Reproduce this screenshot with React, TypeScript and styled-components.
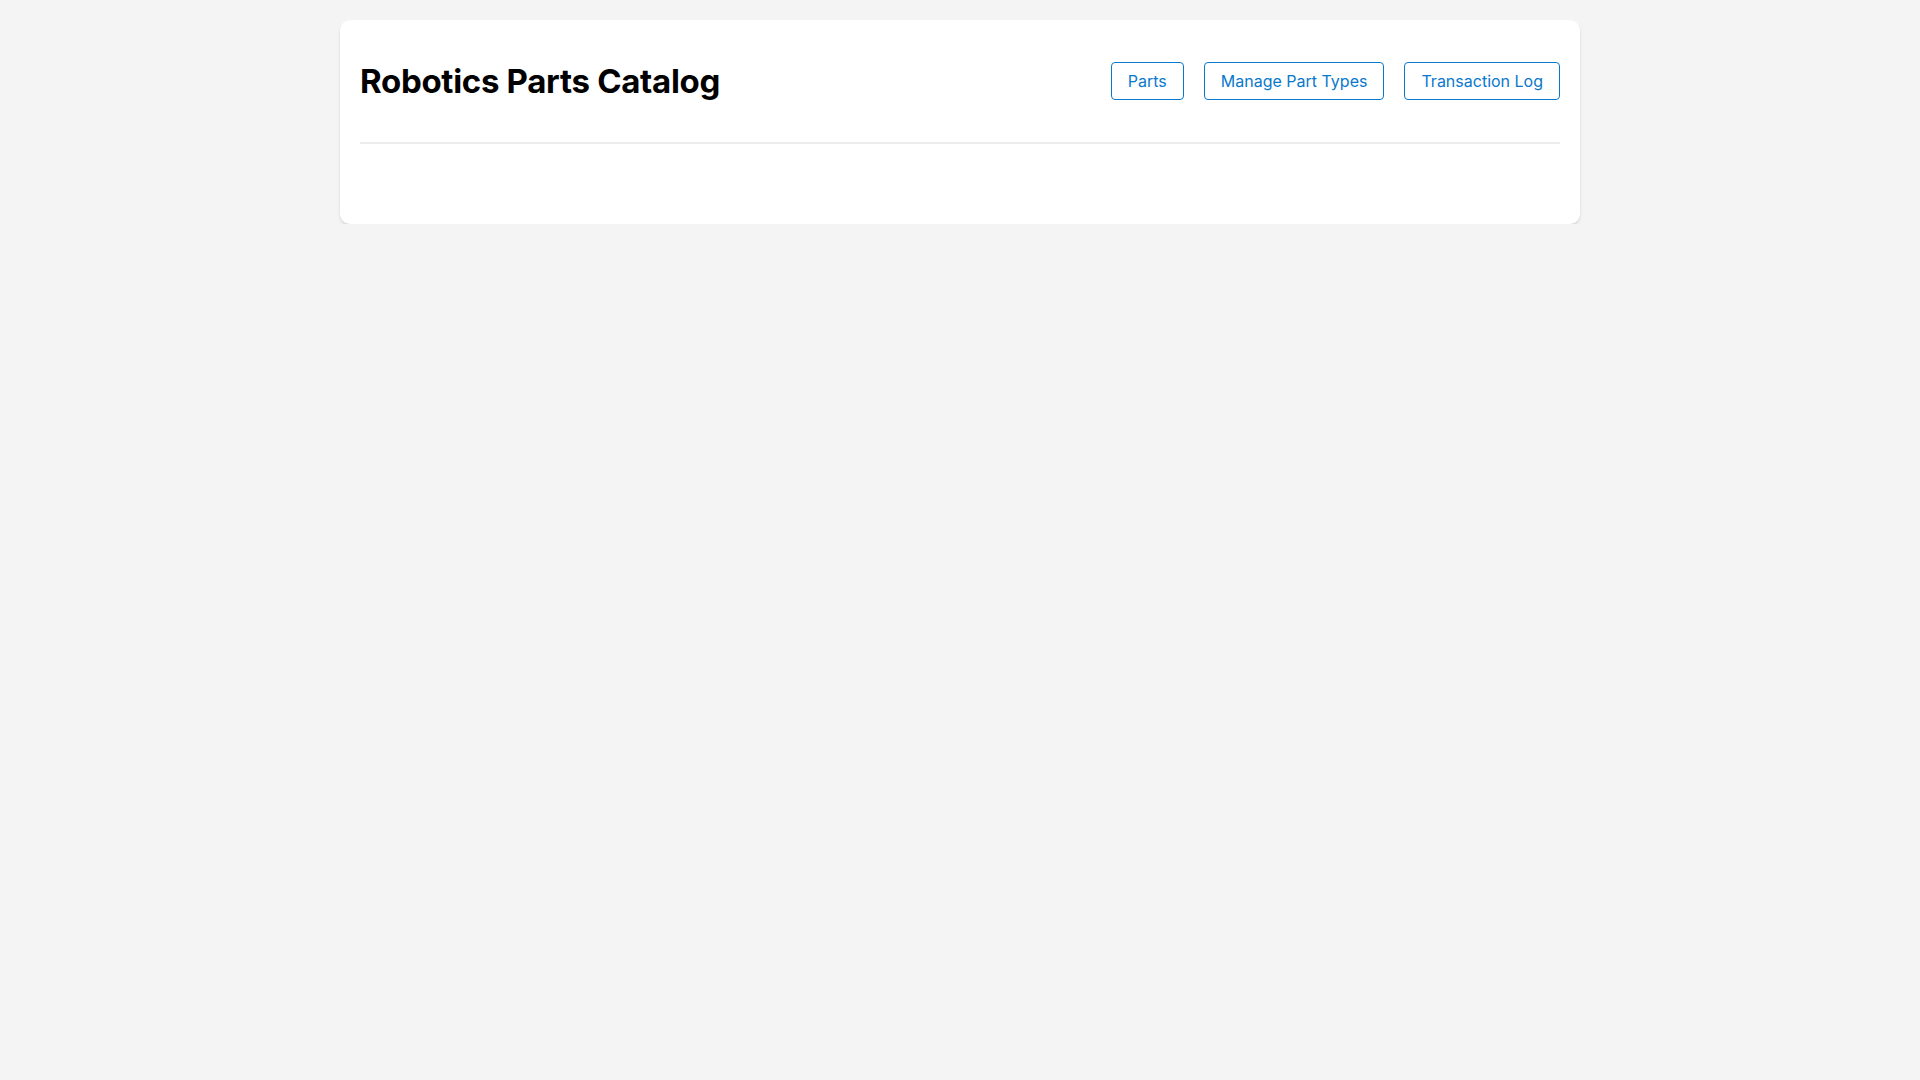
import React from "react";
import styled, { createGlobalStyle } from "styled-components";

const Global = createGlobalStyle`
  html, body { margin: 0; background: #f4f4f4; font-family: Inter, "Noto Sans", sans-serif; }
`;

const Page = styled.div`
  padding-top: 20px;
`;

const Card = styled.div`
  max-width: 1240px;
  margin: 0 auto;
  background: #fff;
  border-radius: 10px;
  box-shadow: 0 2px 3px rgba(0,0,0,0.12);
  padding: 20px;
  box-sizing: border-box;
`;

const Header = styled.header`
  display: flex;
  align-items: center;
  justify-content: space-between;
  height: 82px;
  padding-bottom: 20px;
  border-bottom: 2px solid #ececec;
`;

const Title = styled.h1`
  margin: 0;
  font-size: 33px;
  font-weight: 700;
  color: #000;
  letter-spacing: -0.3px;
`;

const Nav = styled.nav`
  display: flex;
  gap: 20px;
`;

const NavButton = styled.button`
  height: 38px;
  padding: 0 16px;
  background: #fff;
  border: 1px solid #0a78cc;
  border-radius: 4px;
  color: #0a78cc;
  font-family: Inter, sans-serif;
  font-size: 16px;
  cursor: pointer;
`;

const Content = styled.main`
  height: 60px;
`;

export default function App() {
  return (
    <Page>
      <Global />
      <Card>
        <Header>
          <Title>Robotics Parts Catalog</Title>
          <Nav>
            <NavButton>Parts</NavButton>
            <NavButton>Manage Part Types</NavButton>
            <NavButton>Transaction Log</NavButton>
          </Nav>
        </Header>
        <Content />
      </Card>
    </Page>
  );
}
